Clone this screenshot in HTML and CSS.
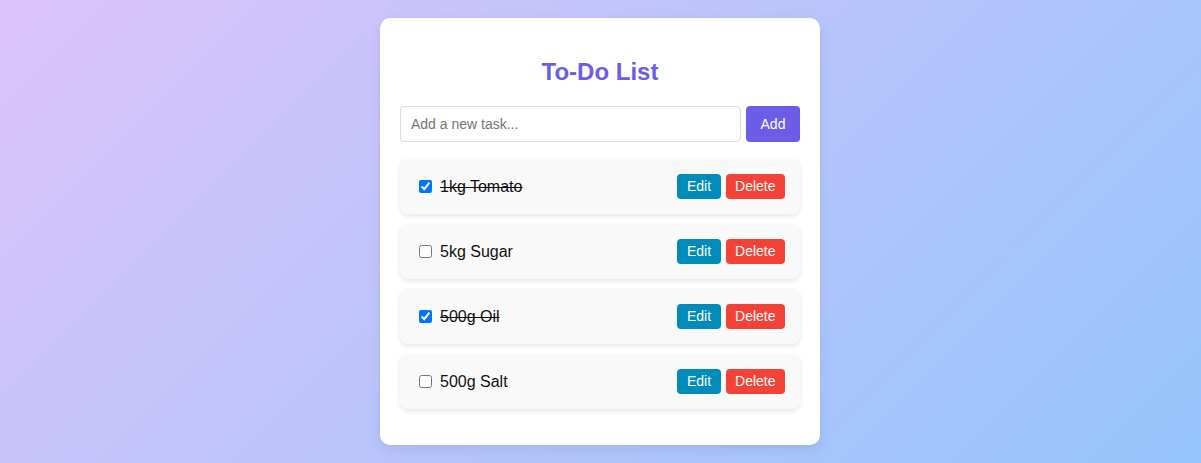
FILE: index.html
```html
<!DOCTYPE html>
<html lang="en">
<head>
<meta charset="UTF-8">
<title>To-Do List</title>
<link rel="stylesheet" href="styles.css">
</head>
<body>
  <div class="container">
    <h2 class="title">To-Do List</h2>
    <div class="input-row">
      <input class="task-input" type="text" placeholder="Add a new task...">
      <button class="add-btn">Add</button>
    </div>
    <ul class="task-list">
      <li class="task">
        <label class="task-label"><input type="checkbox" class="task-check" checked><span class="task-text done">1kg Tomato</span></label>
        <div class="actions"><button class="btn edit">Edit</button><button class="btn delete">Delete</button></div>
      </li>
      <li class="task">
        <label class="task-label"><input type="checkbox" class="task-check"><span class="task-text">5kg Sugar</span></label>
        <div class="actions"><button class="btn edit">Edit</button><button class="btn delete">Delete</button></div>
      </li>
      <li class="task">
        <label class="task-label"><input type="checkbox" class="task-check" checked><span class="task-text done">500g Oil</span></label>
        <div class="actions"><button class="btn edit">Edit</button><button class="btn delete">Delete</button></div>
      </li>
      <li class="task">
        <label class="task-label"><input type="checkbox" class="task-check"><span class="task-text">500g Salt</span></label>
        <div class="actions"><button class="btn edit">Edit</button><button class="btn delete">Delete</button></div>
      </li>
    </ul>
  </div>
</body>
</html>
```
FILE: styles.css
```css
* { box-sizing: border-box; }

html, body { height: 100%; }

body {
  margin: 0;
  padding-right: 1px;
  font-family: "Liberation Sans", Arial, sans-serif;
  background: linear-gradient(135deg, #dcc3fb 0%, #95c5fb 100%);
  display: flex;
  align-items: center;
  justify-content: center;
}

.container {
  width: 440px;
  background: #fff;
  border-radius: 10px;
  padding: 20px 20px 36px;
  box-shadow: 0 4px 12px rgba(0, 0, 0, 0.08);
}

.title {
  margin: 20px 0 20px;
  font-size: 24px;
  line-height: 28px;
  font-weight: bold;
  text-align: center;
  color: #6c5ce7;
}

.input-row {
  display: flex;
  gap: 5px;
  margin-bottom: 17px;
}

.task-input {
  flex: 1;
  height: 36px;
  padding: 10px;
  border: 1px solid #ddd;
  border-radius: 4px;
  font-family: inherit;
  font-size: 14px;
  color: #333;
  outline: none;
}

.task-input::placeholder { color: #757575; }

.add-btn {
  width: 54px;
  height: 36px;
  border: none;
  border-radius: 4px;
  background: #6c5ce7;
  color: #fff;
  font-family: inherit;
  font-size: 14px;
  padding: 0;
}

.task-list {
  list-style: none;
  margin: 0;
  padding: 0;
  display: flex;
  flex-direction: column;
  gap: 10px;
}

.task {
  display: flex;
  align-items: center;
  justify-content: space-between;
  padding: 15px;
  background: #f9f9f9;
  border-radius: 8px;
  box-shadow: 0 2px 5px rgba(0, 0, 0, 0.1);
}

.task-label {
  display: flex;
  align-items: center;
}

.task-check {
  width: 13px;
  height: 13px;
  margin: 0 8px 0 4px;
}

.task-text {
  font-size: 16px;
  color: #111;
}

.task-text.done { text-decoration: line-through; }

.actions {
  display: flex;
  gap: 5px;
}

.btn {
  border: none;
  border-radius: 4px;
  padding: 5px 9.5px;
  font-family: inherit;
  font-size: 14px;
  line-height: 15px;
  color: #fff;
}

.edit { background: #008cba; }
.delete { background: #f44336; }
```
